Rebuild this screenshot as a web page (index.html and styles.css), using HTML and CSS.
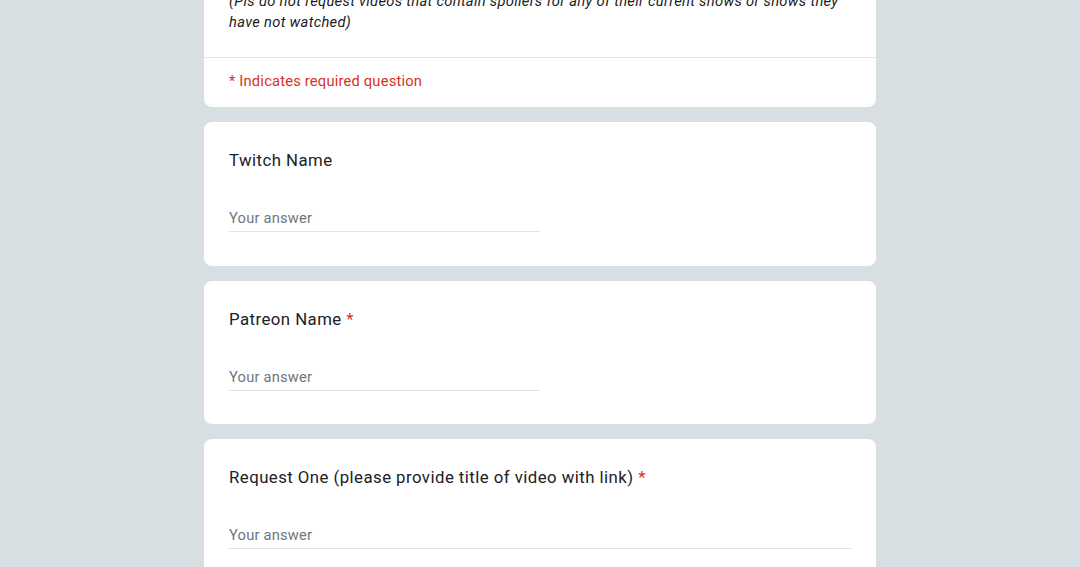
FILE: index.html
```html
<!DOCTYPE html>
<html lang="en">
  <head>
    <meta charset="UTF-8" />
    <title>Video Requests</title>
    <link rel="stylesheet" href="styles.css">
  </head>
  <body>
    <div class="form-wrap">
      <div class="form-card form-header">
        <p class="form-desc">
          (Pls do not request videos that contain spoilers for any of their current shows or shows they have not watched)
        </p>
        <div class="form-required">* Indicates required question</div>
      </div>

      <div class="form-card question">
        <div class="question-title">Twitch Name</div>
        <input type="text" class="answer" placeholder="Your answer" />
      </div>

      <div class="form-card question">
        <div class="question-title">Patreon Name <span class="star">*</span></div>
        <input type="text" class="answer" placeholder="Your answer" />
      </div>

      <div class="form-card question">
        <div class="question-title">Request One (please provide title of video with link) <span class="star">*</span></div>
        <textarea class="answer answer-long" rows="1" placeholder="Your answer"></textarea>
      </div>
    </div>
  </body>
</html>
```

FILE: styles.css
```css
body {
  margin: 0;
  background-color: #d7dfe3;
  font-family: Roboto, "Liberation Sans", sans-serif;
  color: #202124;
}

.form-wrap {
  width: 672px;
  margin: -9px auto 0;
}

.form-card {
  background-color: #ffffff;
  border-radius: 8px;
  margin-bottom: 15px;
}

.form-desc {
  margin: 0;
  padding: 0 25px 24px;
  font-size: 14.7px;
  line-height: 21px;
  font-style: italic;
  letter-spacing: 0.32px;
  border-bottom: 1px solid #e3e5e8;
}

.form-required {
  padding: 13px 25px 16px;
  font-size: 14.7px;
  line-height: 20px;
  letter-spacing: 0.2px;
  color: #d93025;
}

.question {
  padding: 26px 25px 33.5px;
}

.question-title {
  font-size: 16.8px;
  line-height: 24px;
  letter-spacing: 0.45px;
  color: #202124;
}

.star {
  color: #d93025;
}

.answer {
  display: block;
  box-sizing: border-box;
  width: 50%;
  margin-top: 30px;
  padding: 6px 0 3px;
  border: none;
  border-bottom: 1px solid #e0e2e5;
  font-family: inherit;
  font-size: 14.7px;
  line-height: 20px;
  letter-spacing: 0.2px;
  color: #202124;
  background: transparent;
  outline: none;
  resize: none;
}

.answer::placeholder {
  color: #70757a;
}

.answer-long {
  width: 100%;
  height: 30px;
  overflow: hidden;
}
```
